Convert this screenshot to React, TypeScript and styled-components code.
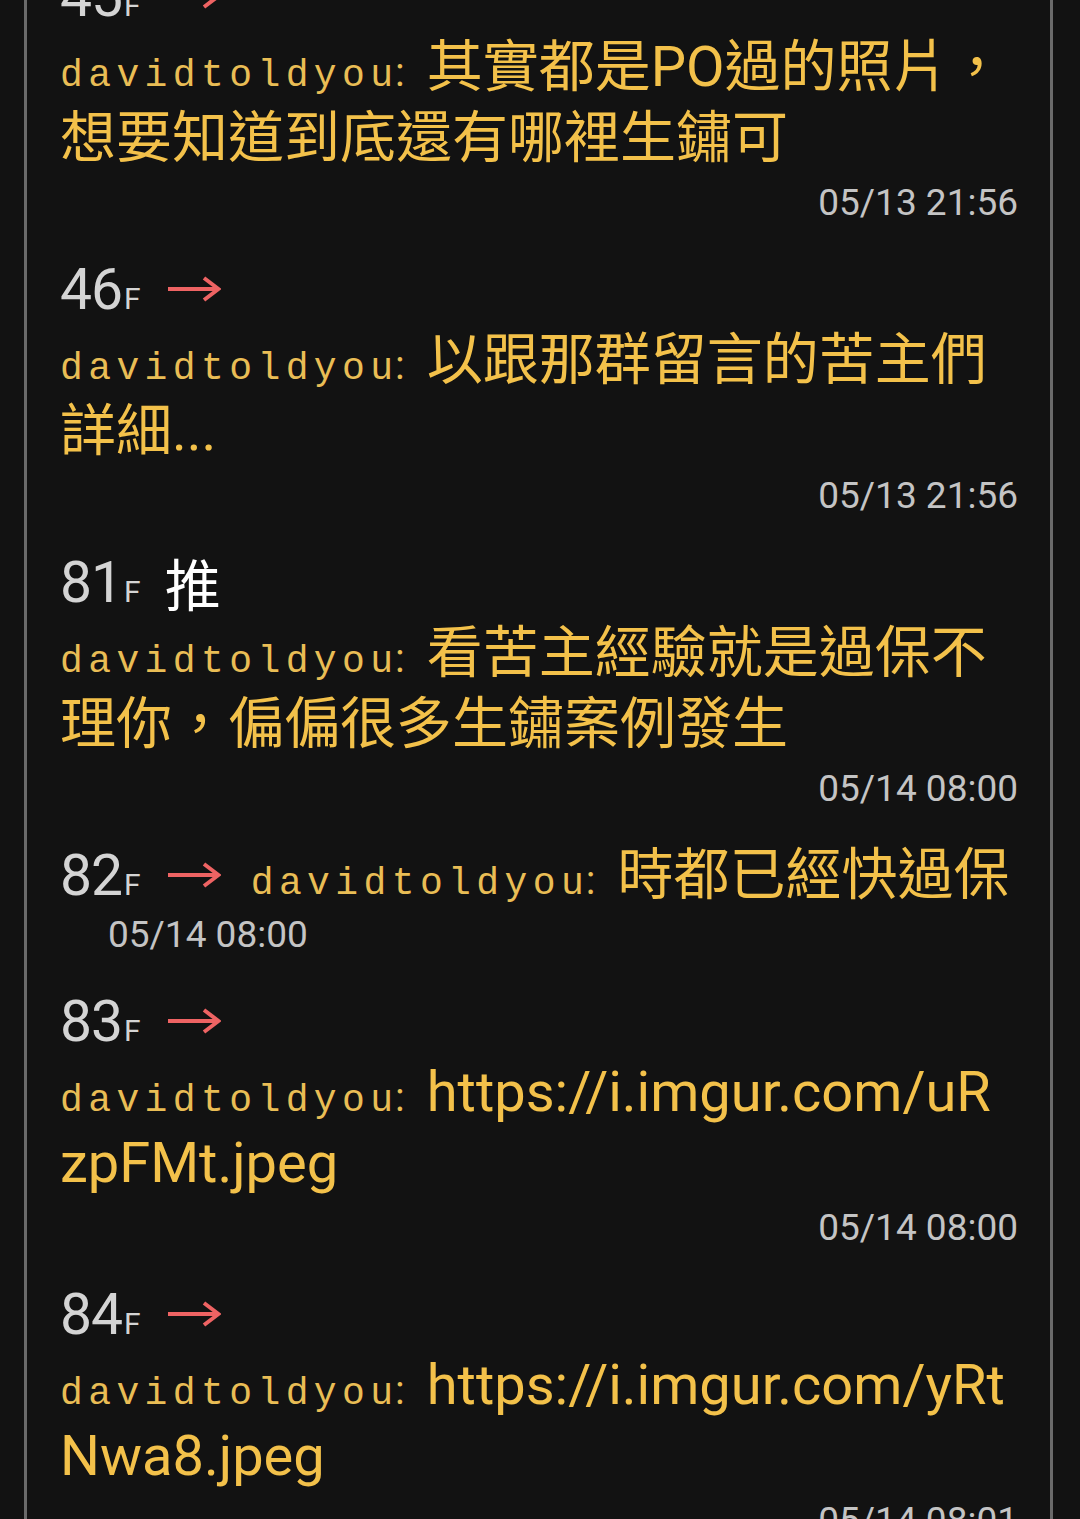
import React from "react";
import styled, { createGlobalStyle } from "styled-components";

const GlobalStyle = createGlobalStyle`
  html, body {
    margin: 0;
    padding: 0;
    background: #121212;
  }
  body {
    font-family: Roboto, "Noto Sans CJK TC", sans-serif;
    overflow: hidden;
  }
`;

const Page = styled.div`
  width: 1080px;
  height: 1519px;
  overflow: hidden;
  background: #121212;
  padding: 0 27px 0 24px;
  box-sizing: border-box;
`;

const Frame = styled.div`
  display: flex;
  flex-direction: column;
  border-left: 3px solid #6a6a6a;
  border-right: 3px solid #6a6a6a;
  height: 100%;
  padding: 0 32px 0 33px;
  box-sizing: border-box;
`;

const List = styled.div`
  margin-top: -34px;
  display: flex;
  flex-direction: column;
`;

const Block = styled.div`
  display: flex;
  flex-direction: column;
  padding-bottom: 31px;
`;

const Header = styled.div`
  display: flex;
  align-items: center;
  height: 60px;
  white-space: nowrap;
`;

const Floor = styled.span`
  font-family: Roboto, sans-serif;
  color: #d4d4d4;
  font-size: 57px;
  line-height: 60px;
  letter-spacing: -1px;
  padding-top: 10px;
`;

const FloorSuffix = styled.span`
  font-size: 30px;
  letter-spacing: 0;
  margin-left: 2px;
`;

const Arrow = styled.svg`
  margin-left: 26px;
  flex: none;
`;

const Push = styled.span`
  font-family: "Noto Sans CJK TC", sans-serif;
  color: #ffffff;
  font-size: 56px;
  line-height: 60px;
  margin-left: 24px;
`;

const Comment = styled.div<{ $inline?: boolean }>`
  margin-top: ${(p) => (p.$inline ? "0" : "6px")};
  margin-left: ${(p) => (p.$inline ? "30px" : "0")};
  margin-right: 8px;
  font-family: Roboto, "Noto Sans CJK TC", sans-serif;
  font-size: 56px;
  line-height: 71px;
  color: #f3c14a;
  word-break: break-all;
`;

const User = styled.span`
  font-family: "Liberation Mono", "DejaVu Sans Mono", monospace;
  font-size: 38px;
  line-height: 1;
  letter-spacing: 5.4px;
  color: #e9bd55;
  margin-right: -5.4px;
`;

const Colon = styled.span`
  font-family: Roboto, sans-serif;
  font-size: 40px;
  line-height: 1;
  color: #e9bd55;
  margin-right: 22px;
  margin-left: 2px;
`;

const Time = styled.div<{ $inline?: boolean }>`
  font-family: Roboto, sans-serif;
  font-size: 37px;
  line-height: 50px;
  color: #c4c4c4;
  text-align: ${(p) => (p.$inline ? "left" : "right")};
  padding-left: ${(p) => (p.$inline ? "48px" : "0")};
  margin-top: ${(p) => (p.$inline ? "5px" : "4px")};
`;

type Post = {
  floor: string;
  tag: "arrow" | "push";
  text: string;
  time: string;
  inline?: boolean;
};

const posts: Post[] = [
  { floor: "45", tag: "arrow", text: "其實都是PO過的照片，想要知道到底還有哪裡生鏽可", time: "05/13 21:56" },
  { floor: "46", tag: "arrow", text: "以跟那群留言的苦主們詳細...", time: "05/13 21:56" },
  { floor: "81", tag: "push", text: "看苦主經驗就是過保不理你，偏偏很多生鏽案例發生", time: "05/14 08:00" },
  { floor: "82", tag: "arrow", text: "時都已經快過保", time: "05/14 08:00", inline: true },
  { floor: "83", tag: "arrow", text: "https://i.imgur.com/uRzpFMt.jpeg", time: "05/14 08:00" },
  { floor: "84", tag: "arrow", text: "https://i.imgur.com/yRtNwa8.jpeg", time: "05/14 08:01" },
];

const ArrowIcon = () => (
  <Arrow width="54" height="26" viewBox="0 0 54 26">
    <path d="M1 13 H51" stroke="#ee6363" strokeWidth="4" fill="none" strokeLinecap="butt" />
    <path d="M37 2 L51.5 13 L37 24" stroke="#ee6363" strokeWidth="4" fill="none" strokeLinejoin="miter" />
  </Arrow>
);

const CommentBody = ({ text, inline }: { text: string; inline?: boolean }) => (
  <Comment $inline={inline}>
    <User>davidtoldyou</User>
    <Colon>:</Colon>
    {text}
  </Comment>
);

export default function App() {
  return (
    <>
      <GlobalStyle />
      <Page>
        <Frame>
          <List>
            {posts.map((p) => (
              <Block key={p.floor}>
                <Header>
                  <Floor>
                    {p.floor}
                    <FloorSuffix>F</FloorSuffix>
                  </Floor>
                  {p.tag === "arrow" ? <ArrowIcon /> : <Push>推</Push>}
                  {p.inline && <CommentBody text={p.text} inline />}
                </Header>
                {!p.inline && <CommentBody text={p.text} />}
                <Time $inline={p.inline}>{p.time}</Time>
              </Block>
            ))}
          </List>
        </Frame>
      </Page>
    </>
  );
}
